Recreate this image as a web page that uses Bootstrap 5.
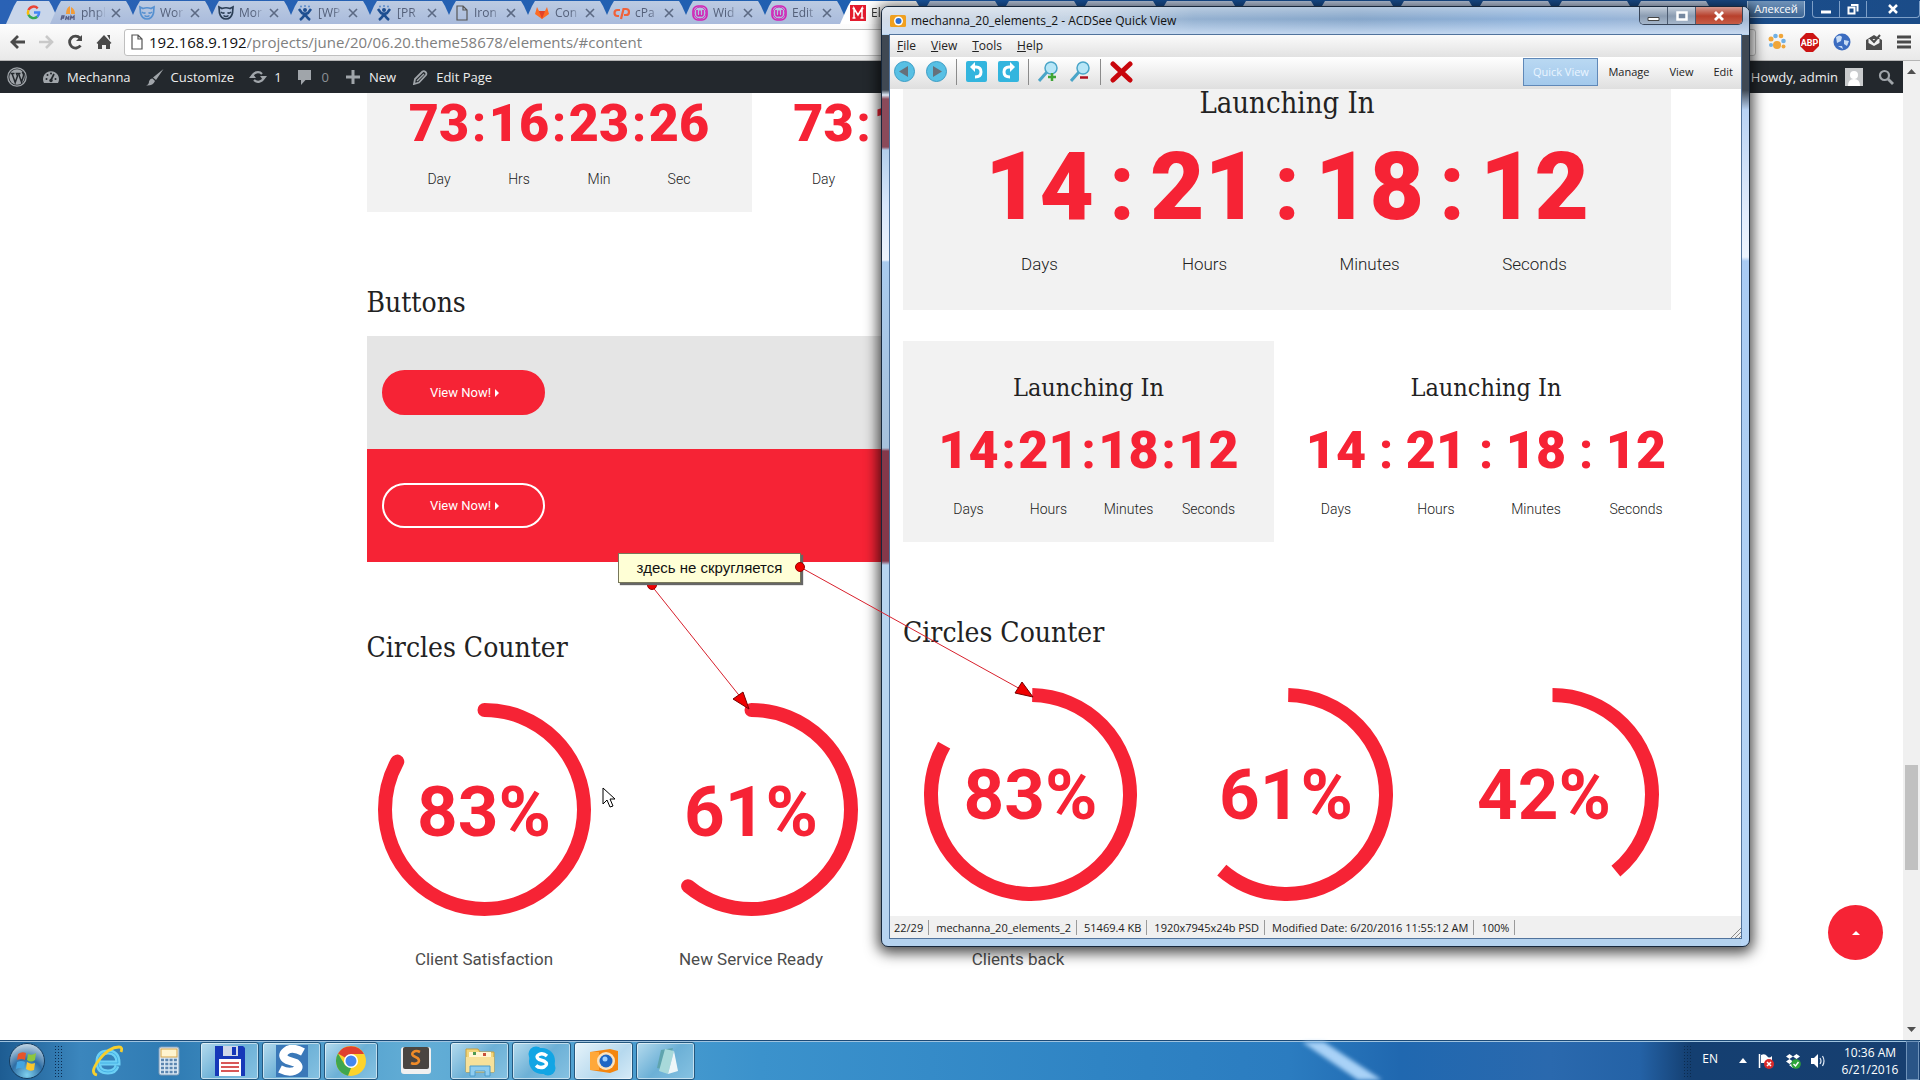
<!DOCTYPE html>
<html lang="en">
<head>
<meta charset="utf-8">
<meta name="viewport" content="width=device-width, initial-scale=1">
<title>Elements - Mechanna</title>
<link href="https://cdn.jsdelivr.net/npm/bootstrap@5.3.0/dist/css/bootstrap.min.css" rel="stylesheet">
<style>
:root { --brand:#f62335; --slab:"Roboto Slab","DejaVu Serif Condensed","DejaVu Serif",serif; --ui:"Open Sans","Noto Sans",sans-serif; }
body { font-family:Roboto,sans-serif; color:#222; height:100vh; overflow:hidden; }
svg { display:block; flex:none; margin-inline:auto; }
button { border:0; background:none; padding:0; }
a { color:inherit; text-decoration:none; }

/* browser tabs */
.tab-strip { height:24px; padding:1px 0 0 6px; background:linear-gradient(90deg,#2a62b5,#1f5fb0 45%,#174f94 60%,#1b4c88); font:12px/22px var(--ui); }
.tab-item { width:87px; margin-right:-8px; padding:0 16px 0 10px; height:23px; gap:5px; background:linear-gradient(#bccbe2,#a9bbdc); color:#54607a; clip-path:polygon(0 100%,8px 5px,11px 0,76px 0,79px 5px,100% 100%); flex:none; }
.tab-item span { flex:1; white-space:nowrap; -webkit-mask-image:linear-gradient(90deg,#000 60%,transparent); mask-image:linear-gradient(90deg,#000 60%,transparent); }
.tab-item.pinned { width:54px; margin-right:-10px; background:#c9d6ea; clip-path:polygon(0 100%,8px 5px,11px 0,43px 0,46px 5px,100% 100%); padding:0; }
.tab-item.current { background:#fff; color:#333; }
.tone-blue { color:#5590d0; }
.tone-navy { color:#2b3e55; }
.tone-grey { color:#555; }
.user-chip { height:17px; background:linear-gradient(#6f92b8,#3e6695); border:1px solid #a9c0da; border-top:0; border-radius:0 0 4px 4px; color:#fff; font-size:11px; line-height:16px; width:58px; text-align:center; }
.sys-btns { height:17px; width:108px; border:1px solid #7d9fc8; border-top:0; border-radius:0 0 4px 4px; margin:0 0 0 7px; }
.sys-btns button { flex:1; height:16px; border-right:1px solid #7d9fc8; }
.sys-btns button:last-child { flex:2; border:0; }

/* browser toolbar */
.tool-strip { height:37px; background:linear-gradient(#fdfdfd,#e9e9e9); border-bottom:1px solid #b5b5b5; padding:0 9px; gap:12px; }
.omnibox { height:27px; border:1px solid #bfbfbf; border-radius:3px; background:#fff; font:15px/24px var(--ui); color:#111; padding-left:5px; }
.omnibox svg { margin:0 5px 0 0; }
.omnibox input { border:0; outline:0; padding:0; color:#808080; background:none; min-width:0; }
.ext-row { gap:14px; }

/* wordpress bar */
.wp-bar { height:32px; background:#23282d; color:#eee; font:13px/32px var(--ui); padding:0 9px 0 7px; gap:15px; flex:none; }
.wp-bar svg { color:#a0a5aa; }
.wp-bar a { display:flex; align-items:center; gap:7px; }
.wp-bar .faded { color:#8b9095; gap:10px; }

.scroll-rail { width:17px; background:#f0f0f0; flex:none; }
.scroll-rail svg { margin-block:8px; }
.rail-thumb { width:13px; height:105px; margin:0 auto; background:#c1c1c1; }
.rail-above { flex:682; }
.rail-below { flex:149; }

/* theme page */
.site-wrap { width:100%; max-width:1170px; }
.site-title { font:400 28px/40px var(--slab); color:#222; margin:71px 0 13px; }
.site-title.after-strip { margin:66px 0 35px; }
.panel-grey { background:#f2f2f2; }
.timer-cell { width:385px; padding:7px 32px 23px; }
.count-row { display:flex; justify-content:center; color:var(--brand); font:700 52px/48px "Roboto Slab",Roboto,sans-serif; }
.count-row b { width:80px; text-align:center; }
.count-row i { width:0; display:flex; justify-content:center; font-style:normal; }
.count-label { display:flex; justify-content:center; font-size:14px; line-height:20px; font-weight:300; margin-top:21px; }
.count-label span { width:80px; text-align:center; }
.count-wide b, .count-wide span { width:100px; }
.count-big.count-row { font-size:94px; line-height:100px; padding-top:20px; }
.count-big b, .count-big span { width:165px; }
.count-big.count-label { font-size:17px; line-height:24px; margin-top:15px; }
.demo-strip { padding:34px 15px; background:#e5e5e5; }
.demo-strip.filled { background:var(--brand); }
.pill-btn { display:flex; gap:4px; width:163px; height:45px; border-radius:23px; font-size:13px; color:#fff; border:2px solid var(--brand); background:var(--brand); padding-left:7px; }
.pill-btn.outlined { border-color:#fff; }
.pill-btn svg { margin:0; }
.ring-row { display:grid; grid-template-columns:repeat(4,267px); margin-left:-16px; }
.ring { width:213px; height:213px; display:grid; place-items:center; color:var(--brand); font:700 71px/80px "Roboto Slab",Roboto,sans-serif; }
.ring > * { grid-area:1/1; }
.ring circle { fill:none; stroke:var(--brand); stroke-width:14; }
.ring-row span { padding-top:5px; }
.ring-name { font-size:17px; line-height:24px; color:#4c4c4c; margin-top:31px; }
.to-top { position:absolute; right:37px; bottom:120px; width:55px; height:55px; border-radius:50%; background:var(--brand); }

/* floating viewer window */
.viewer { position:absolute; left:881px; top:6px; width:869px; padding:0 7px 7px; border:1px solid #17273b; border-radius:7px; box-shadow:0 3px 14px 3px rgba(0,0,0,.72);
  background:
   linear-gradient(180deg,#3f4853 0 55px,#dfeaf8 60px,#8a4a5a 64px 112px,#b3cfec 115px,#d8e7fb 170px,#edf4fd 225px,#a9cbee 227px,#a7c1dc 413px,#84384a 416px 526px,#b8d4f0 530px) 0 28px/8px 100% no-repeat,
   linear-gradient(180deg,#3f4853 0 55px,#b9d3f4 75px,#e2ecfc 180px,#edf4fd 222px,#a9cbf3 226px,#b8d6f5 100%) 100% 28px/8px 100% no-repeat, #b4d2ee; }
.viewer-head { height:27px; margin:0 -7px; padding-left:8px; gap:5px; border-radius:6px 6px 0 0; font:12px/27px var(--ui); color:#111; background:linear-gradient(180deg,rgba(255,255,255,.35),rgba(255,255,255,0) 45%,rgba(205,223,245,.85)),linear-gradient(90deg,#d3dce8,#c3d2e3 24%,#93b0d0 36%,#86a6ca 55%,#8fb2da 75%,#a3b7d2); }
.viewer-head > svg { margin:7px 0 0; }
.viewer-btns { height:18px; border:1px solid #39465a; border-top:0; border-radius:0 0 5px 5px; overflow:hidden; margin-right:6px; }
.viewer-btns button { width:28px; height:18px; background:linear-gradient(#c3cedb,#8b9cb2 50%,#a9bace); border-right:1px solid #4b5a70; }
.viewer-btns .shut { width:46px; border:0; background:linear-gradient(#d49a90,#b8402c 50%,#c9604a); }
.viewer-body { border:1px solid #51739c; background:#fff; }
.menu-strip { height:22px; background:linear-gradient(#fbfbfb,#e2e2e2); font:12px/22px var(--ui); padding-left:7px; gap:15px; }
.icon-strip { height:32px; background:linear-gradient(#fff,#dfdfdf); font:11px/28px var(--ui); padding:0 8px 3px 4px; gap:11px; }
.icon-strip .rule { width:1px; height:26px; background:#8b8b8b; margin:0 -2px; }
.mode-row { display:flex; gap:20px; }
.mode-on { width:75px; height:28px; margin-right:-10px; border:1px solid #5f88b8; background:linear-gradient(#b9d8f2,#a3c9ec); color:#eaf5ff; text-align:center; line-height:26px; }
.canvas-pad { padding:0 56px 15px 13px; }
.canvas-pad .caption { font:400 29px/28px var(--slab); text-align:center; margin:0; }
.canvas-pad .caption-sm { font:400 25px/32px var(--slab); text-align:center; margin:0; padding:31px 0 23px; }
.canvas-pad .site-title { margin:71px 0 35px; }
.panel-large { margin-right:14px; padding-bottom:34px; }
.panel-small { padding-bottom:23px; }
.pair { display:grid; grid-template-columns:371px 400px; column-gap:12px; margin:31px -14px 0 0; }
.pair .count-label { margin-top:24px; }
.trio { display:grid; grid-template-columns:255px 256px 276px; margin-right:-28px; }
.status-strip { height:22px; background:#f0f0f0; font:11px/22px var(--ui); padding-left:4px; }
.status-strip span { padding:0 5px 0 7px; border-right:1px solid #9a9a9a; line-height:15px; white-space:nowrap; }
.status-strip span:first-child { padding-left:0; }

/* annotation */
.note-lines { position:absolute; left:0; top:0; pointer-events:none; }
.note { position:absolute; left:618px; top:553px; width:183px; height:30px; background:#ffffd6; border:1px solid #77775a; box-shadow:2px 2px 1px #666; font:15px/28px "Liberation Sans",sans-serif; text-align:center; color:#111; }
.note-pin { position:absolute; left:795px; top:562px; }
.pointer { position:absolute; left:602px; top:787px; }

/* taskbar */
.task-strip { height:40px; border-top:1px solid #1c4a77; box-shadow:inset 0 1px 0 #9fc3df; flex:none; padding-left:8px; color:#fff;
  background:linear-gradient(90deg,#1d5c92 0,#3b86bd 80px,#2f7bb3 170px,#4c9aca 300px,#63aed6 420px,#4d9fd0 600px,#3b92cc 760px,#2f84c4 1100px,#2b7cc0 1290px,#2068b0 1400px,#2a69ae 1550px,#2462a6 1640px,#143f71 1690px,#173f70 100%); }
.streak { position:absolute; left:1300px; bottom:0; filter:blur(2px); }
.task-item { width:59px; height:38px; margin-right:3px; border:1px solid #23587f; border-radius:3px; background:linear-gradient(135deg,#b5dbee,#6cb0d6 50%,#86c2e2); box-shadow:inset 0 0 0 1px rgba(255,255,255,.55); display:grid; place-items:center; }
.task-item.lit { background:linear-gradient(135deg,#e6f3fa,#b6d9ee 60%,#d6ebf7); }
.task-item.slim { width:54px; }
.task-plain { width:62px; display:grid; place-items:center; }
.task-plain.roomy { width:69px; }
.dots { width:10px; height:32px; background:radial-gradient(circle,#0c2c50 1px,transparent 1px) 0 0/3px 3px; }
.tray { gap:9px; font:12px/17px var(--ui); }
.tray svg { margin:0; }
.clock { text-align:center; width:62px; margin-left:4px; }
.lang { margin:0 10px 4px 0; }
.peek { width:13px; height:100%; margin:0 1px 0 -4px; border:1px solid #6f93ba; background:#2a5587; }
</style>
</head>
<body class="d-flex flex-column position-relative">

<svg width="0" height="0" class="position-absolute" aria-hidden="true">
  <defs>
    <symbol id="x" viewBox="0 0 10 10"><path d="M1 1l8 8M9 1l-8 8" stroke="#5c6a84" stroke-width="1.6"/></symbol>
    <symbol id="bear" viewBox="0 0 16 16"><path d="M1 2l3 1.500q4-1.500 8 0L15 2l-.5 6Q13 14 8 14T1.500 8z" fill="none" stroke="currentColor" stroke-width="1.700"/><path d="M3 7q2 2 3.500.5M13 7q-2 2-3.500.5M5.500 10.500q2.500 2 5 0" fill="none" stroke="currentColor" stroke-width="1.500"/></symbol>
    <symbol id="jira" viewBox="0 0 16 16"><circle cx="8" cy="5" r="2" fill="#1e4f91"/><path d="M2 4l3 4q3 1.500 6 0l3-4M8 8q-1 4-5 7M8 8q1 4 5 7" stroke="#1e4f91" stroke-width="2.600" fill="none"/><circle cx="4" cy="1.500" r="1" fill="#5b8bc9"/><circle cx="8" cy="1" r="1" fill="#5b8bc9"/><circle cx="12" cy="1.500" r="1" fill="#5b8bc9"/></symbol>
    <symbol id="sheet" viewBox="0 0 14 16"><path d="M2 1h6l4 4v10H2zM8 1v4h4" fill="none" stroke="currentColor" stroke-width="1.200"/></symbol>
    <symbol id="pink" viewBox="0 0 16 16"><rect x="1" y="1" width="14" height="14" rx="5" fill="none" stroke="#d31fb4" stroke-width="1.600"/><path d="M5 5v4q0 2 1.500 2T8 9V5.500V9q0 2 1.500 2T11 9V5" fill="none" stroke="#d31fb4" stroke-width="1.600"/><circle cx="8" cy="8" r="6" fill="none" stroke="#d31fb4"/></symbol>
  </defs>
</svg>

<nav class="tab-strip d-flex" aria-label="Tabs">
  <a href="#" class="tab-item pinned d-flex align-items-center justify-content-center" aria-label="Google"><svg width="15" height="15" viewBox="0 0 16 16" fill="none" stroke-width="2.600"><path d="M12.500 3.500A6 6 0 0 0 2.600 5.500" stroke="#ea4335"/><path d="M2.600 5.500a6 6 0 0 0 0 5" stroke="#fbbc05"/><path d="M2.600 10.500a6 6 0 0 0 9.400 2" stroke="#34a853"/><path d="M12 12.500A6 6 0 0 0 14 8H8.500" stroke="#4285f4"/></svg></a>
  <a href="#" class="tab-item d-flex align-items-center"><svg width="16" height="16" viewBox="0 0 16 16"><path d="M6 9Q6 3 10 1v8zM11 2q4 2 4 7h-4z" fill="#f29c38"/><path d="M1 15l1-4h2l-.5 2H2M5.500 15l1-4M8 15l1-4M6 13h2.500M10 15l1-4 1 2 2-2v4" stroke="#555c85" fill="none" stroke-width="1.300"/></svg><span>phpl</span><svg width="10" height="10"><use href="#x"/></svg></a>
  <a href="#" class="tab-item d-flex align-items-center"><svg width="16" height="16" class="tone-blue"><use href="#bear"/></svg><span>Wor</span><svg width="10" height="10"><use href="#x"/></svg></a>
  <a href="#" class="tab-item d-flex align-items-center"><svg width="16" height="16" class="tone-navy"><use href="#bear"/></svg><span>Mor</span><svg width="10" height="10"><use href="#x"/></svg></a>
  <a href="#" class="tab-item d-flex align-items-center"><svg width="16" height="16"><use href="#jira"/></svg><span>[WP</span><svg width="10" height="10"><use href="#x"/></svg></a>
  <a href="#" class="tab-item d-flex align-items-center"><svg width="16" height="16"><use href="#jira"/></svg><span>[PR</span><svg width="10" height="10"><use href="#x"/></svg></a>
  <a href="#" class="tab-item d-flex align-items-center"><svg width="14" height="16" class="tone-grey"><use href="#sheet"/></svg><span>Iron</span><svg width="10" height="10"><use href="#x"/></svg></a>
  <a href="#" class="tab-item d-flex align-items-center"><svg width="16" height="16" viewBox="0 0 16 16"><path d="M8 14L1 9l2-7 2 4h6l2-4 2 7z" fill="#fc6d26"/><path d="M8 14L5 6h6z" fill="#e24329"/></svg><span>Con</span><svg width="10" height="10"><use href="#x"/></svg></a>
  <a href="#" class="tab-item d-flex align-items-center"><svg width="17" height="14" viewBox="0 0 17 14"><path d="M7 4H4.500a3 3 0 0 0 0 6H6M8 13l2.500-10H13a3 3 0 0 1 0 6h-2" fill="none" stroke="#f0623a" stroke-width="2.200"/></svg><span>cPa</span><svg width="10" height="10"><use href="#x"/></svg></a>
  <a href="#" class="tab-item d-flex align-items-center"><svg width="16" height="16"><use href="#pink"/></svg><span>Wid</span><svg width="10" height="10"><use href="#x"/></svg></a>
  <a href="#" class="tab-item d-flex align-items-center"><svg width="16" height="16"><use href="#pink"/></svg><span>Edit</span><svg width="10" height="10"><use href="#x"/></svg></a>
  <a href="#" class="tab-item current d-flex align-items-center"><svg width="16" height="16" viewBox="0 0 16 16"><rect width="16" height="16" fill="#e31b2e"/><path d="M2.500 13h3M4 13V3.500L8 10l4-6.500V13M10.500 13h3M2.500 3.500H5M11 3.500h2.500" stroke="#fff" stroke-width="1.500" fill="none"/></svg><span>Ele</span></a>
  <i class="tab-item"></i><i class="tab-item"></i><i class="tab-item"></i><i class="tab-item"></i><i class="tab-item"></i><i class="tab-item"></i><i class="tab-item"></i><i class="tab-item"></i><i class="tab-item"></i><i class="tab-item"></i>
  <button type="button" class="user-chip ms-auto">Алексей</button>
  <div class="sys-btns d-flex">
    <button type="button" aria-label="Minimize"><svg width="12" height="12"><path d="M1 9h10" stroke="#fff" stroke-width="3"/></svg></button>
    <button type="button" aria-label="Restore"><svg width="12" height="12"><path d="M1.500 4.500h6v6h-6zM4 2h6.500v6.500" fill="none" stroke="#fff" stroke-width="2"/></svg></button>
    <button type="button" aria-label="Close"><svg width="12" height="12"><path d="M2 2l8 8M10 2l-8 8" stroke="#fff" stroke-width="2.500"/></svg></button>
  </div>
</nav>

<div class="tool-strip d-flex align-items-center">
  <button type="button" aria-label="Back"><svg width="17" height="16"><path d="M16 8H3M9 2L3 8l6 6" fill="none" stroke="#4a4a4a" stroke-width="2.800"/></svg></button>
  <button type="button" aria-label="Forward"><svg width="17" height="16"><path d="M1 8h13M8 2l6 6-6 6" fill="none" stroke="#c9c9c9" stroke-width="2.600"/></svg></button>
  <button type="button" aria-label="Reload"><svg width="17" height="16"><path d="M13.500 11.500a6 6 0 1 1-.5-7.500" fill="none" stroke="#4a4a4a" stroke-width="2.800"/><path d="M15 1v6H9z" fill="#4a4a4a"/></svg></button>
  <button type="button" aria-label="Home"><svg width="16" height="16"><path d="M8 1l7.500 8-1.500 1v5h-4v-4H6v4H2v-5L.5 9z" fill="#4a4a4a"/><path d="M11 1h3v5" fill="#4a4a4a"/></svg></button>
  <label class="omnibox d-flex align-items-center flex-grow-1"><svg width="14" height="16" class="tone-grey"><use href="#sheet"/></svg>192.168.9.192<input class="flex-grow-1" type="text" value="/projects/june/20/06.20.theme58678/elements/#content" aria-label="Address"></label>
  <div class="ext-row d-flex align-items-center">
    <svg width="18" height="18"><g fill="#f0a63a"><ellipse cx="9" cy="12" rx="4" ry="4"/><circle cx="3" cy="6" r="2.500"/><circle cx="13" cy="3" r="2.300"/><circle cx="15.500" cy="13.500" r="2"/></g><g fill="#6fb0e6"><circle cx="7.500" cy="3" r="2.300"/><circle cx="15.500" cy="8" r="2.300"/><circle cx="3" cy="12" r="2"/></g></svg>
    <svg width="19" height="19" viewBox="0 0 19 19"><path d="M6 0h7l6 6v7l-6 6H6l-6-6V6z" fill="#cc1414"/><text x="9.500" y="13" text-anchor="middle" font-family="Roboto" font-weight="700" font-size="9" fill="#fff">ABP</text></svg>
    <svg width="18" height="18"><circle cx="9" cy="9" r="8.500" fill="#3b6cc0"/><path d="M3 4q4-3 6 0l-1 4-4 2zM11 7l5 1-2 5-3-2zM5 13l4 0 1 3" fill="#c7dcf5"/></svg>
    <svg width="18" height="18"><path d="M1 7l8-5 8 5v10H1z" fill="#4c4c4c"/><path d="M3.500 6h11v4L9 13l-5.500-3z" fill="#f1f1f1"/><path d="M5 5l4 4 6-7" stroke="#4c4c4c" fill="none" stroke-width="2"/></svg>
    <button type="button" aria-label="Menu"><svg width="14" height="14"><path d="M0 2h14M0 7h14M0 12h14" stroke="#4a4a4a" stroke-width="2.800"/></svg></button>
  </div>
</div>

<div class="d-flex flex-grow-1 overflow-hidden">
  <div class="d-flex flex-column flex-grow-1 overflow-hidden">
    <nav class="wp-bar d-flex align-items-center" aria-label="Admin bar">
      <a href="#" aria-label="WordPress"><svg width="20" height="20" viewBox="0 0 20 20"><circle cx="10" cy="10" r="9.200" fill="none" stroke="currentColor" stroke-width="1.300"/><circle cx="10" cy="10" r="7.700" fill="currentColor"/><path d="M3.500 6.500h4M5 6.500l3.200 9L10.500 9 9.500 6.500h4M11.500 6.500l3 8.500 2-6q.5-3-1.500-4" fill="none" stroke="#23282d" stroke-width="1.500"/></svg></a>
      <a href="#"><svg width="18" height="14" viewBox="0 0 17 14"><path d="M1.500 13a8 8 0 1 1 14 0z" fill="currentColor"/><path d="M8.500 10l3-6" stroke="#23282d" stroke-width="1.700"/><g fill="#23282d"><circle cx="4" cy="9" r="1"/><circle cx="5" cy="5" r="1"/><circle cx="8.500" cy="3.500" r="1"/><circle cx="13" cy="9" r="1"/><circle cx="8.500" cy="10.500" r="1.700"/></g></svg>Mechanna</a>
      <a href="#"><svg width="18" height="17" viewBox="0 0 18 17"><path d="M17.500 0L10 11 7 8.500zM6.500 9.500L9 12q-2 5-9 4.500 3-1 3-4 1-3 3.500-3z" fill="currentColor"/></svg>Customize</a>
      <a href="#"><svg width="18" height="14" viewBox="0 0 18 14"><path d="M3.500 6A5.500 5 0 0 1 13 4M14.500 8A5.500 5 0 0 1 5 10" fill="none" stroke="currentColor" stroke-width="2.200"/><path d="M0 8l3.500-4.500L7 8zM11 6l3.500 4.500L18 6z" fill="currentColor"/></svg>1</a>
      <a href="#" class="faded"><svg width="15" height="15" viewBox="0 0 15 15"><path d="M1 0h13v10H8.500L4 15v-5H1z" fill="currentColor"/></svg>0</a>
      <a href="#"><svg width="18" height="14" viewBox="-2 0 18 14"><path d="M7 0v14M0 7h14" stroke="currentColor" stroke-width="3"/></svg>New</a>
      <a href="#"><svg width="18" height="15" viewBox="-2 0 18 15"><path d="M1 14l1-5L9.500 1.500q1.500-1 3 .5t.5 3L6 12.500z" fill="none" stroke="currentColor" stroke-width="1.800"/><path d="M4 11l7-7" stroke="currentColor" stroke-width="1.500"/></svg>Edit Page</a>
      <a href="#" class="ms-auto">Howdy, admin<svg width="18" height="18"><rect width="18" height="18" fill="#c9cbcd"/><circle cx="9" cy="7" r="4" fill="#fff"/><path d="M3 18q0-7 6-7t6 7z" fill="#fff"/></svg></a>
      <button type="button" aria-label="Search"><svg width="16" height="16"><circle cx="6.500" cy="6.500" r="4.500" fill="none" stroke="currentColor" stroke-width="2.200"/><path d="M10 10l5 5" stroke="currentColor" stroke-width="2.800"/></svg></button>
    </nav>

    <main class="bg-white flex-grow-1 overflow-hidden">
      <div class="site-wrap mx-auto">
        <section class="d-flex" aria-label="Countdown">
          <div class="timer-cell panel-grey">
            <div class="count-row"><b>73</b><i>:</i><b>16</b><i>:</i><b>23</b><i>:</i><b>26</b></div>
            <div class="count-label"><span>Day</span><span>Hrs</span><span>Min</span><span>Sec</span></div>
          </div>
          <div class="timer-cell">
            <div class="count-row justify-content-start"><b>73</b><i>:</i><b>16</b></div>
            <div class="count-label justify-content-start"><span>Day</span></div>
          </div>
        </section>
        <h2 class="site-title">Buttons</h2>
        <div class="demo-strip"><a href="#" class="pill-btn align-items-center justify-content-center">View Now!<svg width="8" height="8"><path d="M0 0l4 4-4 4z" fill="#fff"/></svg></a></div>
        <div class="demo-strip filled"><a href="#" class="pill-btn outlined align-items-center justify-content-center">View Now!<svg width="8" height="8"><path d="M0 0l4 4-4 4z" fill="#fff"/></svg></a></div>
        <h2 class="site-title after-strip">Circles Counter</h2>
        <div class="ring-row">
          <div class="d-flex flex-column align-items-center"><div class="ring"><svg width="213" height="213"><circle cx="106.500" cy="106.500" r="99.500" pathLength="100" stroke-dasharray="83 100" stroke-linecap="round" transform="rotate(-90 106.500 106.500)"/></svg><span>83%</span></div><div class="ring-name">Client Satisfaction</div></div>
          <div class="d-flex flex-column align-items-center"><div class="ring"><svg width="213" height="213"><circle cx="106.500" cy="106.500" r="99.500" pathLength="100" stroke-dasharray="61 100" stroke-linecap="round" transform="rotate(-90 106.500 106.500)"/></svg><span>61%</span></div><div class="ring-name">New Service Ready</div></div>
          <div class="d-flex flex-column align-items-center"><div class="ring"></div><div class="ring-name">Clients back</div></div>
        </div>
      </div>
    </main>
  </div>
  <div class="scroll-rail d-flex flex-column">
    <svg width="9" height="5"><path d="M0 5l4.500-5L9 5z" fill="#505050"/></svg>
    <div class="rail-above"></div>
    <div class="rail-thumb"></div>
    <div class="rail-below"></div>
    <svg width="9" height="5"><path d="M0 0l4.500 5L9 0z" fill="#505050"/></svg>
  </div>
</div>

<footer class="task-strip d-flex align-items-center">
  <button type="button" aria-label="Start"><svg width="38" height="38" viewBox="0 0 38 38"><defs><radialGradient id="orb" cx=".5" cy=".9" r=".9"><stop offset="0" stop-color="#7ed0ee"/><stop offset=".5" stop-color="#2f6ea5"/><stop offset="1" stop-color="#c7d9e6"/></radialGradient></defs><circle cx="19" cy="19" r="17.500" fill="url(#orb)" stroke="#143c60"/><path d="M10 12q4-3 8-1l-1 7q-4-2-8 0z" fill="#e8542a"/><path d="M20 12q4 2 8-1l-1 7q-4 3-8 0z" fill="#8dc63f"/><path d="M9 20q4-2 8 0l-1 7q-4-2-8 0z" fill="#44a4e0"/><path d="M19 20q4 3 8 1l-1 7q-4 2-8-1z" fill="#fbc62d"/></svg></button>
  <i class="dots ms-2 me-2"></i>
  <button type="button" class="task-plain ms-1" aria-label="Internet Explorer"><svg width="32" height="32" viewBox="0 0 32 32"><path d="M9 18h18q0-11-10-11T7 17q0 10 10 10 7 0 9-6" fill="none" stroke="#6cd0f5" stroke-width="5"/><path d="M9 18h18q0-11-10-11T7 17q0 10 10 10 7 0 9-6" fill="none" stroke="#2e9ddb" stroke-width="1" opacity=".6"/><path d="M6 30Q-2 28 8 15T28 2q4 0 2 5" fill="none" stroke="#f7cf2d" stroke-width="2.800"/></svg></button>
  <button type="button" class="task-plain" aria-label="Calculator"><svg width="22" height="30"><rect x="1" y="1" width="20" height="28" rx="2" fill="#dce9f4" stroke="#7e9cb8"/><rect x="3" y="3" width="16" height="8" fill="#fff4cf" stroke="#d6a54a"/><path d="M3 14h16M3 18h16M3 22h16M3 26h16" stroke="#5c86b0" stroke-width="2.500" stroke-dasharray="3 1.300"/></svg></button>
  <button type="button" class="task-item" aria-label="Total Commander"><svg width="32" height="32"><path d="M1 1h28l2 2v28H1z" fill="#1638b8"/><rect x="9" y="1" width="15" height="10" fill="#cfd8e8"/><rect x="18" y="2" width="4" height="8" fill="#1638b8"/><rect x="5" y="14" width="22" height="17" fill="#fff"/><path d="M7 18h18M7 22h18M7 26h18" stroke="#c22" stroke-width="1.500"/></svg></button>
  <button type="button" class="task-item" aria-label="Snagit"><svg width="32" height="32"><rect width="32" height="32" fill="#3a78b8"/><path d="M27 7Q16 1 10 6t1 9l9 3q6 5-2 8-6 2-14-2" stroke="#fff" stroke-width="8" fill="none"/></svg></button>
  <button type="button" class="task-item slim" aria-label="Chrome"><svg width="32" height="32" viewBox="0 0 32 32"><circle cx="16" cy="16" r="15" fill="#fdd32c"/><path d="M16 16L3 8.500A15 15 0 0 1 29 9H16z" fill="#e0402f"/><path d="M3 8.500L10 20l6 3-3 7.700A15 15 0 0 1 3 8.500z" fill="#3fa64e"/><circle cx="16" cy="16" r="7" fill="#fff"/><circle cx="16" cy="16" r="5.500" fill="#4687ee"/></svg></button>
  <button type="button" class="task-plain roomy" aria-label="Sublime Text"><svg width="32" height="30"><rect x="1" y="1" width="30" height="27" rx="3" fill="#f0f0f0"/><rect x="3" y="1" width="26" height="22" rx="2" fill="#4a4541"/><path d="M20 6q-4-2-6.500 0t0 4l4 2q3 3 0 5-3 1.500-6.500 0" stroke="#f08b28" stroke-width="2.600" fill="none"/></svg></button>
  <button type="button" class="task-item" aria-label="Explorer"><svg width="32" height="32"><path d="M2 4h12l2 3h14v20H2z" fill="#f1d67c" stroke="#c99f3c"/><path d="M5 7h22v6H5z" fill="#fff6d4"/><path d="M9 7h3v3H9z" fill="#4d9a52"/><path d="M19 8h3v3h-3z" fill="#c9503a"/><path d="M2 12h28v15H2z" fill="#f7e19a"/><path d="M6 31V21h20v10h-5v-5H11v5z" fill="#8fcdf0" stroke="#4a9bcb"/></svg></button>
  <button type="button" class="task-item" aria-label="Skype"><svg width="32" height="32"><circle cx="16" cy="16" r="13" fill="#12a5e4"/><circle cx="10" cy="9" r="7.500" fill="#12a5e4"/><circle cx="22" cy="23" r="7.500" fill="#12a5e4"/><path d="M21 11q-4-3.500-8-1.500t0 5l5 1.500q5 3 0 6-5 1.500-8-1.500" stroke="#fff" stroke-width="3.400" fill="none"/></svg></button>
  <button type="button" class="task-item lit" aria-label="ACDSee"><svg width="32" height="28"><path d="M2 5l20-3 8 2v19l-8 3-20-3z" fill="#f4860f"/><path d="M2 5h9v18H2z" fill="#ffa83a"/><circle cx="18" cy="14" r="9" fill="#fbe3c0"/><circle cx="18" cy="14" r="6.500" fill="#1f66c4"/><circle cx="17" cy="12" r="2.500" fill="#9fd0ff"/></svg></button>
  <button type="button" class="task-item" aria-label="Notepad"><svg width="30" height="30"><path d="M10 4l12-2-7 22-9-2z" fill="#5fa4ae"/><path d="M14 3l9 2-6 23-9-3z" fill="#a8d9da"/><path d="M23 5l4 20-10 3z" fill="#eef6f8"/></svg></button>
  <div class="tray ms-auto d-flex align-items-center h-100">
    <i class="dots"></i>
    <span class="lang">EN</span>
    <svg width="12" height="5"><path d="M2 5l4-5 4 5z" fill="#fff"/></svg>
    <svg width="18" height="16"><path d="M1.500 1v14" stroke="#fff" stroke-width="1.500"/><path d="M3 2q4-2 6 1t5 0v7H3z" fill="#fff"/><circle cx="11" cy="11" r="5" fill="#d92b2b"/><path d="M9 9l4 4M13 9l-4 4" stroke="#fff" stroke-width="1.500"/></svg>
    <svg width="16" height="16"><path d="M4.500 1L8 3.500 4.500 6 1 3.500zM11.500 1L15 3.500 11.500 6 8 3.500zM4.500 6L8 8.500 4.500 11 1 8.500zM4 12l4-2v5z" fill="#fff"/><circle cx="11" cy="11" r="4.800" fill="#2fa53a"/><path d="M8.500 11l2 2 3-4" fill="none" stroke="#fff" stroke-width="1.400"/></svg>
    <svg width="16" height="16"><path d="M1 5h3l4-4v14l-4-4H1z" fill="#fff"/><path d="M10 5q2 3 0 6M12.500 3q3 5 0 10" fill="none" stroke="#dfe9f5" stroke-width="1.200"/></svg>
    <div class="clock">10:36 AM<br>6/21/2016</div>
    <i class="peek"></i>
  </div>
</footer>

<button type="button" class="to-top" aria-label="Scroll to top"><svg width="8" height="4"><path d="M0 4l4-4 4 4z" fill="#fff"/></svg></button>
<svg class="streak" width="90" height="38" aria-hidden="true"><path d="M2 0h22l58 38H58z" fill="#a9d2f7"/></svg>

<section class="viewer" aria-label="ACDSee Quick View">
  <header class="viewer-head d-flex">
    <svg width="16" height="13"><rect y="1" width="16" height="12" rx="1.500" fill="#f0a020"/><circle cx="8.500" cy="7" r="4.500" fill="#fff"/><circle cx="8.500" cy="7" r="3" fill="#2e6fd0"/></svg>
    <span>mechanna_20_elements_2 - ACDSee Quick View</span>
    <div class="viewer-btns d-flex ms-auto">
      <button type="button" aria-label="Minimize"><svg width="14" height="12"><path d="M1 7.500h11v3H1z" fill="#fff" stroke="#444"/></svg></button>
      <button type="button" aria-label="Maximize"><svg width="14" height="12"><path d="M2.500 2.500h9v7h-9z" fill="#7688a0" stroke="#fff" stroke-width="2.500"/></svg></button>
      <button type="button" class="shut" aria-label="Close"><svg width="12" height="12"><path d="M2 2l8 8M10 2l-8 8" stroke="#fff" stroke-width="2.800"/></svg></button>
    </div>
  </header>
  <div class="viewer-body">
    <nav class="menu-strip d-flex"><a href="#"><u>F</u>ile</a><a href="#"><u>V</u>iew</a><a href="#"><u>T</u>ools</a><a href="#"><u>H</u>elp</a></nav>
    <div class="icon-strip d-flex align-items-center">
      <button type="button" aria-label="Previous"><svg width="21" height="21"><circle cx="10.500" cy="10.500" r="10" fill="#58c0e4" stroke="#3a9cc4"/><path d="M14 5v11l-9-5.500z" fill="#66707a"/></svg></button>
      <button type="button" aria-label="Next"><svg width="21" height="21"><circle cx="10.500" cy="10.500" r="10" fill="#58c0e4" stroke="#3a9cc4"/><path d="M7 5v11l9-5.500z" fill="#66707a"/></svg></button>
      <i class="rule"></i>
      <button type="button" aria-label="Rotate left"><svg width="21" height="21"><rect width="21" height="21" rx="2" fill="#33b5de"/><path d="M7 6h3q5 0 5 5t-6 5" fill="none" stroke="#fff" stroke-width="3"/><path d="M9 1v10L4 6z" fill="#fff"/></svg></button>
      <button type="button" aria-label="Rotate right"><svg width="21" height="21"><rect width="21" height="21" rx="2" fill="#33b5de"/><path d="M14 6h-3q-5 0-5 5t6 5" fill="none" stroke="#fff" stroke-width="3"/><path d="M12 1v10l5-5z" fill="#fff"/></svg></button>
      <i class="rule"></i>
      <button type="button" aria-label="Zoom in"><svg width="21" height="21"><path d="M1 20l8-9" stroke="#4aa5c8" stroke-width="3"/><circle cx="13" cy="7" r="6" fill="#b7e6f7" stroke="#4aa5c8" stroke-width="1.500"/><path d="M14 12v8M10 16h8" stroke="#3fa535" stroke-width="2.500"/></svg></button>
      <button type="button" aria-label="Zoom out"><svg width="21" height="21"><path d="M1 20l8-9" stroke="#4aa5c8" stroke-width="3"/><circle cx="13" cy="7" r="6" fill="#b7e6f7" stroke="#4aa5c8" stroke-width="1.500"/><path d="M10 16.500h8" stroke="#b01020" stroke-width="2.500"/></svg></button>
      <i class="rule"></i>
      <button type="button" aria-label="Delete"><svg width="23" height="22"><path d="M3 3l17 16M20 3L3 19" stroke="#c8060c" stroke-width="5" stroke-linecap="round"/></svg></button>
      <div class="mode-row ms-auto"><a href="#" class="mode-on">Quick View</a><a href="#">Manage</a><a href="#">View</a><a href="#">Edit</a></div>
    </div>
    <div class="canvas-pad">
      <div class="panel-grey panel-large">
        <h2 class="caption">Launching In</h2>
        <div class="count-row count-big"><b>14</b><i>:</i><b>21</b><i>:</i><b>18</b><i>:</i><b>12</b></div>
        <div class="count-label count-big"><span>Days</span><span>Hours</span><span>Minutes</span><span>Seconds</span></div>
      </div>
      <div class="pair">
        <div class="panel-grey panel-small">
          <h3 class="caption-sm">Launching In</h3>
          <div class="count-row"><b>14</b><i>:</i><b>21</b><i>:</i><b>18</b><i>:</i><b>12</b></div>
          <div class="count-label"><span>Days</span><span>Hours</span><span>Minutes</span><span>Seconds</span></div>
        </div>
        <div>
          <h3 class="caption-sm">Launching In</h3>
          <div class="count-row count-wide"><b>14</b><i>:</i><b>21</b><i>:</i><b>18</b><i>:</i><b>12</b></div>
          <div class="count-label count-wide"><span>Days</span><span>Hours</span><span>Minutes</span><span>Seconds</span></div>
        </div>
      </div>
      <h2 class="site-title">Circles Counter</h2>
      <div class="trio">
        <div class="ring mx-auto"><svg width="213" height="213"><circle cx="106.500" cy="106.500" r="99.500" pathLength="100" stroke-dasharray="83 100" transform="rotate(-89 106.500 106.500)"/></svg><span>83%</span></div>
        <div class="ring mx-auto"><svg width="213" height="213"><circle cx="106.500" cy="106.500" r="99.500" pathLength="100" stroke-dasharray="61 100" transform="rotate(-89 106.500 106.500)"/></svg><span>61%</span></div>
        <div class="ring mx-auto"><svg width="213" height="213"><circle cx="106.500" cy="106.500" r="99.500" pathLength="100" stroke-dasharray="39 100" transform="rotate(-90 106.500 106.500)"/></svg><span class="pe-3">42%</span></div>
      </div>
    </div>
    <div class="status-strip d-flex align-items-center"><span>22/29</span><span>mechanna_20_elements_2</span><span>51469.4 KB</span><span>1920x7945x24b PSD</span><span>Modified Date: 6/20/2016 11:55:12 AM</span><span>100%</span><svg class="ms-auto me-0 align-self-end" width="10" height="10"><path d="M0 10L10 0M4 10l6-6M8 10l2-2" stroke="#8c8c8c"/></svg></div>
  </div>
</section>

<svg class="note-lines" width="1060" height="720" aria-hidden="true"><g stroke="#d8202c" fill="#f00000"><path d="M651 585L742 699M800 567L1022 690" fill="none"/><circle cx="652" cy="585" r="4.500" stroke="#900"/><path d="M749 709l-16-10 10-7zM1033 697l-18-4 7-11z" stroke="#700"/></g></svg>
<div class="note">здесь не скругляется</div>
<svg class="note-pin" width="10" height="10" aria-hidden="true"><circle cx="5" cy="5" r="4.500" fill="#f00000" stroke="#900"/></svg>
<svg class="pointer" width="14" height="22" aria-hidden="true"><path d="M1 1v16l4-4 3 7 3-1-3-7h5z" fill="#fff" stroke="#000"/></svg>

<script src="https://cdn.jsdelivr.net/npm/bootstrap@5.3.0/dist/js/bootstrap.bundle.min.js"></script>
</body>
</html>
